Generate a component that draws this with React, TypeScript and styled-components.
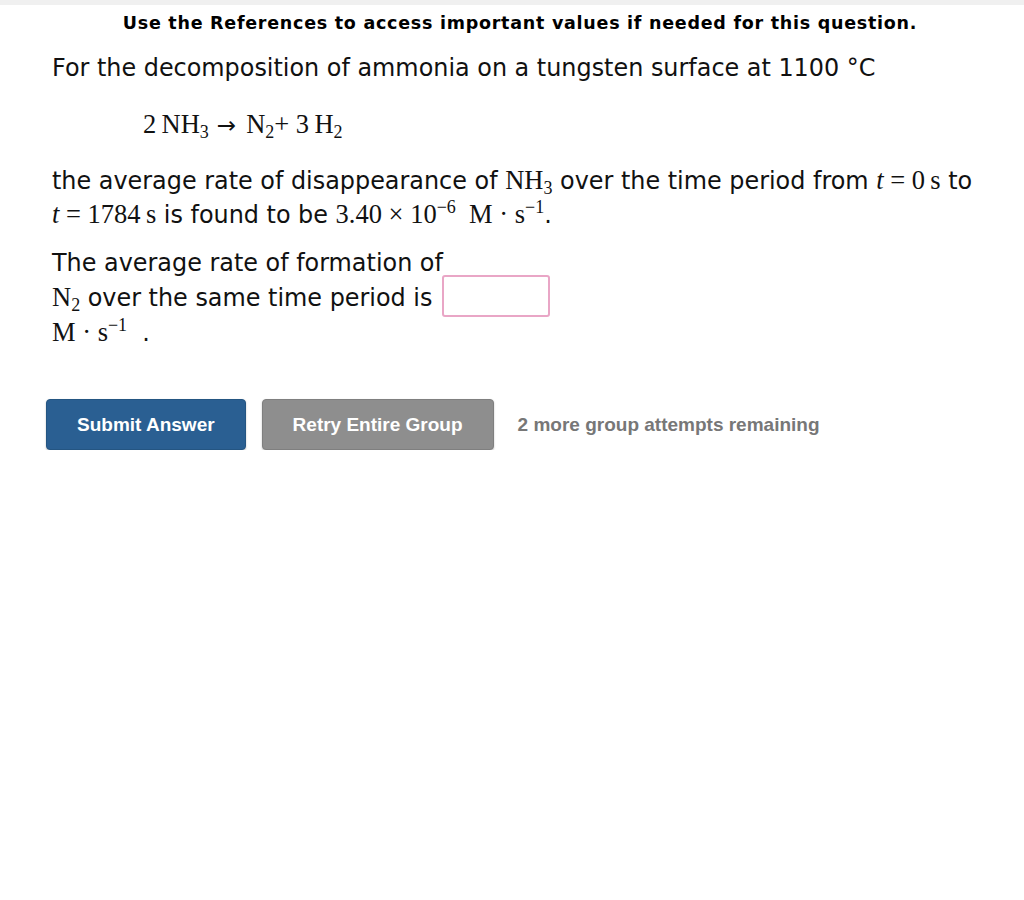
import styled, { createGlobalStyle } from 'styled-components'

const Global = createGlobalStyle`
  html, body {
    margin: 0;
    padding: 0;
    background: #ffffff;
  }
`

const TopStrip = styled.div`
  height: 5px;
  background: #f0f0f0;
`

const Banner = styled.div`
  height: 35px;
  display: flex;
  align-items: center;
  justify-content: center;
  padding-left: 16px;
  font-family: "DejaVu Sans", Verdana, sans-serif;
  font-weight: bold;
  font-size: 17.5px;
  letter-spacing: 0.74px;
  color: #000;
`

const Question = styled.div`
  padding: 0 0 0 52px;
  font-family: "DejaVu Sans", Verdana, sans-serif;
  font-size: 23.9px;
  color: #111;
`

const Para = styled.p<{ $top?: number }>`
  margin: ${p => p.$top ?? 0}px 0 0 0;
  line-height: 34.5px;
  white-space: nowrap;
`

const Equation = styled.div`
  margin: 22px 0 0 91px;
  line-height: 34px;
`

const M = styled.span`
  font-family: "Liberation Serif", "Times New Roman", serif;
  font-size: 26.5px;
  line-height: 1;
  sub {
    font-size: 18px;
    vertical-align: -5px;
    line-height: 0;
  }
  sup {
    font-size: 18px;
    vertical-align: 10px;
    line-height: 0;
  }
`

const Arrow = styled.span`
  margin: 0 10px 0 8px;
  font-family: "DejaVu Sans", sans-serif;
  font-size: 23px;
  line-height: 0;
`

const I = styled.i`
  font-style: italic;
`

const AnswerBox = styled.span`
  display: inline-block;
  box-sizing: border-box;
  width: 108px;
  height: 42px;
  margin: -5px 0 -5px 10px;
  border: 2px solid #e9a6c6;
  border-radius: 3px;
  vertical-align: -6px;
  background: #fff;
`

const Actions = styled.div`
  display: flex;
  align-items: center;
  gap: 16px;
  margin: 49px 0 0 46px;
  font-family: "Liberation Sans", Arial, sans-serif;
`

const Button = styled.button<{ $variant: 'primary' | 'muted' }>`
  height: 51px;
  padding: 0 30px;
  border-radius: 4px;
  border: 1px solid ${p => (p.$variant === 'primary' ? '#245582' : '#7f7f7f')};
  background: ${p => (p.$variant === 'primary' ? '#2a5f92' : '#8e8e8e')};
  color: #fff;
  font-family: "Liberation Sans", Arial, sans-serif;
  font-weight: bold;
  font-size: 19px;
  box-shadow: 0 1px 2px rgba(0, 0, 0, 0.25);
`

const Attempts = styled.span`
  margin-left: 8px;
  color: #777;
  font-weight: bold;
  font-size: 19px;
`

export default function App() {
  return (
    <>
      <Global />
      <TopStrip />
      <Banner>Use the References to access important values if needed for this question.</Banner>
      <Question>
        <Para $top={11}>For the decomposition of ammonia on a tungsten surface at 1100 °C</Para>
        <Equation>
          <M>
            2&thinsp;NH<sub>3</sub>
            <Arrow>→</Arrow>N<sub>2</sub>+ 3&thinsp;H<sub>2</sub>
          </M>
        </Equation>
        <Para $top={22}>
          the average rate of disappearance of <M>NH<sub>3</sub></M> over the time period from{' '}
          <M><I>t</I> = 0&thinsp;s</M> to
          <br />
          <M><I>t</I> = 1784&thinsp;s</M> is found to be <M>3.40 × 10<sup>−6</sup> &nbsp;M · s<sup>−1</sup></M>.
        </Para>
        <Para $top={13}>
          The average rate of formation of
          <br />
          <M>N<sub>2</sub></M> over the same time period is
          <AnswerBox />
          <br />
          <M>M · s<sup>−1</sup></M> &nbsp;.
        </Para>
      </Question>
      <Actions>
        <Button $variant="primary">Submit Answer</Button>
        <Button $variant="muted">Retry Entire Group</Button>
        <Attempts>2 more group attempts remaining</Attempts>
      </Actions>
    </>
  )
}
